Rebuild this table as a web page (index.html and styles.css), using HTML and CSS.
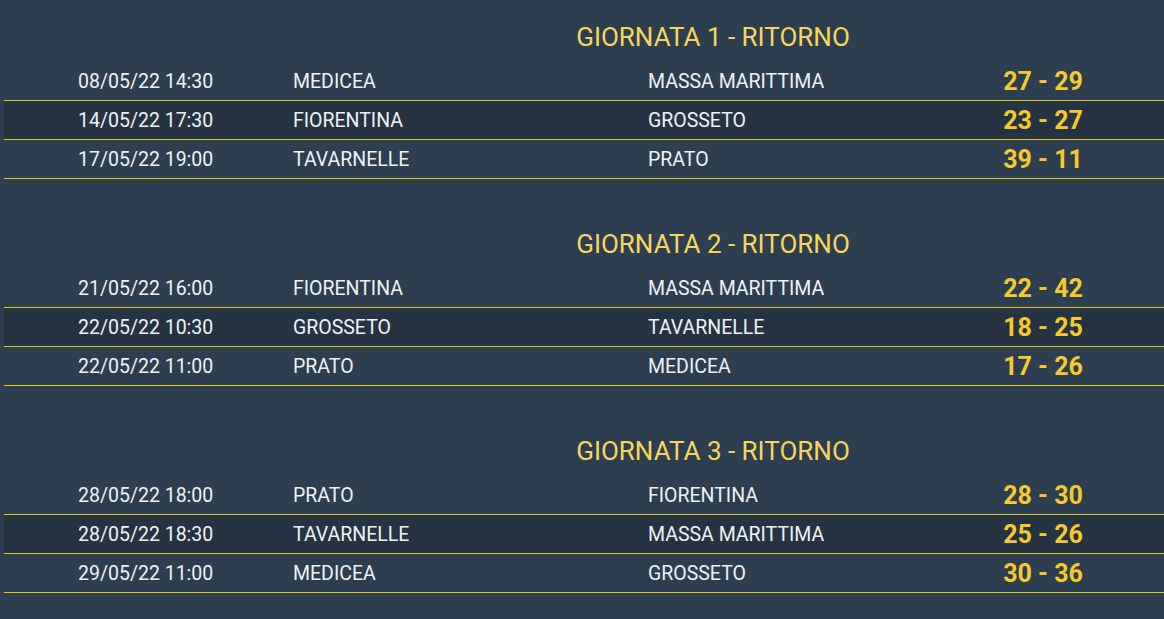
FILE: index.html
```html
<!DOCTYPE html>
<html lang="it">
<head>
<meta charset="utf-8">
<title>Calendario - Ritorno</title>
<link rel="stylesheet" href="styles.css">
</head>
<body>
<main class="calendar">
  <section class="round">
    <h2 class="round-title">GIORNATA 1 - RITORNO</h2>
    <div class="match"><span class="date">08/05/22 14:30</span><span class="team">MEDICEA</span><span class="team">MASSA MARITTIMA</span><span class="score">27 - 29</span></div>
    <div class="match alt"><span class="date">14/05/22 17:30</span><span class="team">FIORENTINA</span><span class="team">GROSSETO</span><span class="score">23 - 27</span></div>
    <div class="match"><span class="date">17/05/22 19:00</span><span class="team">TAVARNELLE</span><span class="team">PRATO</span><span class="score">39 - 11</span></div>
  </section>
  <section class="round">
    <h2 class="round-title">GIORNATA 2 - RITORNO</h2>
    <div class="match"><span class="date">21/05/22 16:00</span><span class="team">FIORENTINA</span><span class="team">MASSA MARITTIMA</span><span class="score">22 - 42</span></div>
    <div class="match alt"><span class="date">22/05/22 10:30</span><span class="team">GROSSETO</span><span class="team">TAVARNELLE</span><span class="score">18 - 25</span></div>
    <div class="match"><span class="date">22/05/22 11:00</span><span class="team">PRATO</span><span class="team">MEDICEA</span><span class="score">17 - 26</span></div>
  </section>
  <section class="round">
    <h2 class="round-title">GIORNATA 3 - RITORNO</h2>
    <div class="match"><span class="date">28/05/22 18:00</span><span class="team">PRATO</span><span class="team">FIORENTINA</span><span class="score">28 - 30</span></div>
    <div class="match alt"><span class="date">28/05/22 18:30</span><span class="team">TAVARNELLE</span><span class="team">MASSA MARITTIMA</span><span class="score">25 - 26</span></div>
    <div class="match"><span class="date">29/05/22 11:00</span><span class="team">MEDICEA</span><span class="team">GROSSETO</span><span class="score">30 - 36</span></div>
  </section>
</main>
</body>
</html>
```

FILE: styles.css
```css
html, body {
  margin: 0;
  padding: 0;
  background: #2c3e50;
  height: 100%;
}

body {
  font-family: Roboto, "Liberation Sans", sans-serif;
  color: #eef2f4;
}

.calendar {
  display: flex;
  flex-direction: column;
  gap: 40px;
  padding: 12px 0 0 4px;
}

.round-title {
  margin: 0;
  height: 50px;
  display: flex;
  align-items: center;
  justify-content: center;
  padding-left: 258px;
  font-size: 26px;
  font-weight: 400;
  color: #f7d55c;
}

.match {
  display: grid;
  grid-template-columns: 215px 355px 1fr 200px;
  align-items: center;
  height: 38px;
  padding: 0 21px 0 74px;
  border-bottom: 1px solid #d8cb1c;
  font-size: 19.5px;
}

.match.alt {
  background: #253342;
}

.score {
  text-align: center;
  font-size: 25px;
  font-weight: 700;
  color: #f7c92a;
}
```
